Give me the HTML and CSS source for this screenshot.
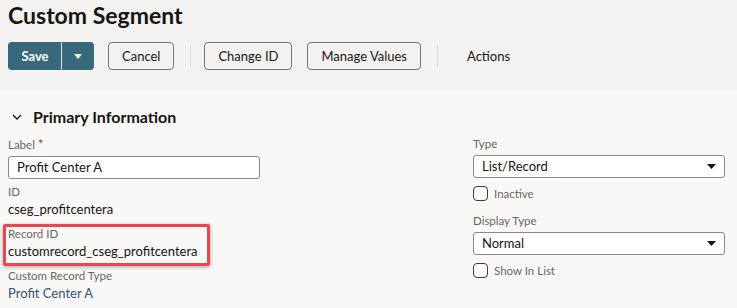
FILE: index.html
```html
<!DOCTYPE html>
<html lang="en">
<head>
<meta charset="utf-8">
<title>Custom Segment</title>
<link rel="stylesheet" href="styles.css">
</head>
<body>
<header class="page-head">
  <h1 class="title">Custom Segment</h1>
  <div class="toolbar">
    <div class="split">
      <button class="btn primary save">Save</button>
      <button class="btn primary more" aria-label="More save options">
        <svg width="8" height="5" viewBox="0 0 8 5"><path d="M0 0h8L4 5z" fill="#fff"/></svg>
      </button>
    </div>
    <button class="btn cancel">Cancel</button>
    <span class="sep sep-a"></span>
    <button class="btn">Change ID</button>
    <button class="btn manage">Manage Values</button>
    <span class="sep sep-b"></span>
    <button class="btn ghost">Actions</button>
  </div>
</header>
<main class="content">
  <div class="section-head">
    <svg class="chev" width="10" height="6" viewBox="0 0 10 6"><path d="M1 1l4 4 4-4" fill="none" stroke="#161513" stroke-width="1.4"/></svg>
    <h2 class="section-title">Primary Information</h2>
  </div>
  <div class="form-grid">
    <div class="col">
      <div class="field">
        <div class="label">Label <span class="req">*</span></div>
        <div class="input">Profit Center A</div>
      </div>
      <div class="field">
        <div class="label">ID</div>
        <div class="value">cseg_profitcentera</div>
      </div>
      <div class="field highlighted">
        <div class="label">Record ID</div>
        <div class="value">customrecord_cseg_profitcentera</div>
      </div>
      <div class="field">
        <div class="label">Custom Record Type</div>
        <div class="value link">Profit Center A</div>
      </div>
    </div>
    <div class="col">
      <div class="field">
        <div class="label">Type</div>
        <div class="select">List/Record
          <svg class="caret" width="9" height="5" viewBox="0 0 9 5"><path d="M0 0h9L4.5 5z" fill="#161513"/></svg>
        </div>
      </div>
      <div class="check"><span class="box"></span><span class="check-text">Inactive</span></div>
      <div class="field dt">
        <div class="label">Display Type</div>
        <div class="select">Normal
          <svg class="caret" width="9" height="5" viewBox="0 0 9 5"><path d="M0 0h9L4.5 5z" fill="#161513"/></svg>
        </div>
      </div>
      <div class="check"><span class="box"></span><span class="check-text">Show In List</span></div>
    </div>
  </div>
</main>
</body>
</html>
```
FILE: styles.css
```css
* { box-sizing: border-box; }
html, body { margin: 0; padding: 0; }
body {
  background: #f9f8f6;
  font-family: Lato, "Noto Sans", sans-serif;
  color: #161513;
  width: 737px;
  height: 308px;
  overflow: hidden;
}
.page-head {
  background: #f3f2f0;
  height: 89px;
  padding: 1px 8px 0;
}
.title {
  margin: 0;
  font-size: 23px;
  line-height: 28px;
  font-weight: 700;
  color: #161513;
}
.toolbar {
  display: flex;
  align-items: center;
  margin-top: 13px;
  height: 28px;
}
.btn {
  height: 28px;
  font-family: inherit;
  font-size: 13px;
  color: #161513;
  background: transparent;
  border: 1px solid #7a7671;
  border-radius: 4px;
  padding: 0 13px;
  margin: 0;
  display: inline-flex;
  align-items: center;
  justify-content: center;
}
.split { display: flex; }
.btn.primary {
  background: #38687c;
  border-color: #38687c;
  color: #fff;
  font-weight: 700;
}
.btn.save {
  width: 54px;
  border-radius: 4px 0 0 4px;
  border-right: 1px solid #d9e3e7;
}
.btn.more {
  width: 32px;
  padding: 0;
  border-radius: 0 4px 4px 0;
  border-left: 0;
}
.btn.cancel { margin-left: 14px; }
.btn.manage { margin-left: 15px; }
.sep {
  width: 1px;
  height: 22px;
  background: #dcd9d5;
}
.sep-a { margin: 0 13px 0 16px; }
.sep-b { margin: 0 0 0 16px; }
.btn.ghost {
  border-color: transparent;
  margin-left: 13px;
  padding: 0 15px;
}
.content { padding: 0 8px; }
.section-head {
  display: flex;
  align-items: center;
  height: 22px;
  margin-top: 17px;
}
.chev { margin-left: 4px; margin-right: 11px; }
.section-title {
  margin: 0;
  font-size: 16px;
  font-weight: 700;
  line-height: 22px;
}
.form-grid {
  display: grid;
  grid-template-columns: 252px 252px;
  column-gap: 213px;
  margin-top: 8px;
}
.field { position: relative; margin-bottom: 7px; }
.label {
  font-size: 11.5px;
  line-height: 16px;
  color: #6b6560;
}
.req { color: #a8462e; font-size: 14px; }
.input, .select {
  margin-top: 3px;
  height: 23px;
  background: #fff;
  border: 1px solid #8d8883;
  border-radius: 3px;
  font-size: 13px;
  line-height: 21px;
  padding: 0 8px;
  color: #161513;
}
.field:first-child { margin-bottom: 5px; }
.select { display: flex; justify-content: space-between; align-items: center; }
.value {
  font-size: 13px;
  line-height: 19px;
  color: #161513;
}
.value.link { color: #2f5473; }
.highlighted::after {
  content: "";
  position: absolute;
  top: -2px;
  left: -5px;
  width: 201px;
  bottom: -5px;
  border: 3px solid #e9474d;
  border-radius: 2px;
  box-shadow: 0 1px 4px rgba(0, 0, 0, 0.35);
}
.check {
  display: flex;
  align-items: center;
  height: 15px;
  margin-top: 8px;
}
.box {
  width: 15px;
  height: 15px;
  border: 1.5px solid #3d3b38;
  border-radius: 4px;
  background: #fbfbfa;
}
.check-text {
  margin-left: 6px;
  font-size: 11.5px;
  color: #6b6560;
}
.field.dt { margin-top: 12px; margin-bottom: 0; }
```
